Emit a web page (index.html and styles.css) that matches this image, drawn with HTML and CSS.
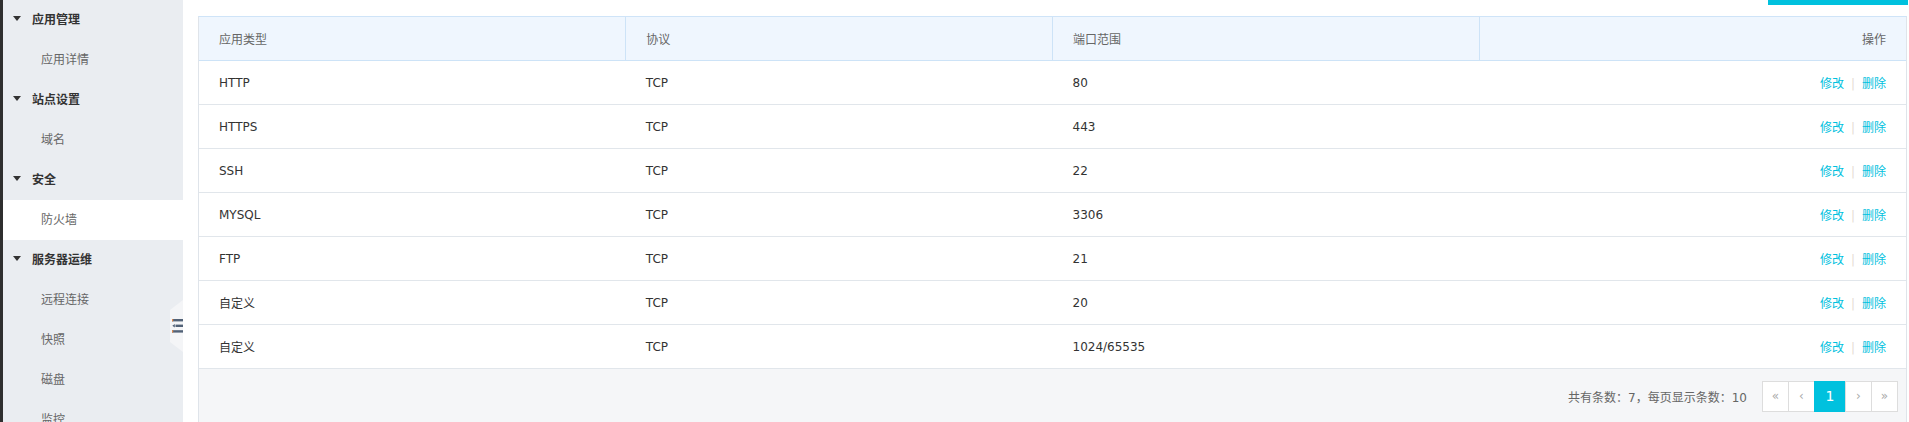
FILE: index.html
```html
<!DOCTYPE html>
<html lang="zh-CN">
<head>
<meta charset="utf-8">
<title>防火墙</title>
<link rel="stylesheet" href="styles.css">
</head>
<body>
<div class="page">
  <div class="strip"></div>
  <aside class="sidebar">
    <div class="group"><span class="caret"></span>应用管理</div>
    <div class="item">应用详情</div>
    <div class="group"><span class="caret"></span>站点设置</div>
    <div class="item">域名</div>
    <div class="group"><span class="caret"></span>安全</div>
    <div class="item active">防火墙</div>
    <div class="group"><span class="caret"></span>服务器运维</div>
    <div class="item">远程连接</div>
    <div class="item">快照</div>
    <div class="item">磁盘</div>
    <div class="item">监控</div>
    <div class="toggle">
      <svg width="11" height="14" viewBox="0 0 11 14">
        <rect x="0" y="0" width="11" height="2.4" fill="#526277"/>
        <rect x="0" y="0" width="1.2" height="2.4" fill="#e08a4c"/>
        <rect x="3.5" y="5.6" width="7.5" height="2.4" fill="#526277"/>
        <path d="M0.3 6.8 L2.8 5 L2.8 8.6 Z" fill="#526277"/>
        <rect x="0" y="11.2" width="11" height="2.4" fill="#526277"/>
        <rect x="0" y="11.2" width="1.2" height="2.4" fill="#e08a4c"/>
      </svg>
    </div>
  </aside>
  <main class="main">
    <div class="topbar"><div class="add-btn"></div></div>
    <div class="panel">
      <table class="grid">
        <thead>
          <tr><th>应用类型</th><th>协议</th><th>端口范围</th><th class="op">操作</th></tr>
        </thead>
        <tbody>
          <tr><td>HTTP</td><td>TCP</td><td>80</td><td class="op"><a>修改</a><span class="sep">|</span><a>删除</a></td></tr>
          <tr><td>HTTPS</td><td>TCP</td><td>443</td><td class="op"><a>修改</a><span class="sep">|</span><a>删除</a></td></tr>
          <tr><td>SSH</td><td>TCP</td><td>22</td><td class="op"><a>修改</a><span class="sep">|</span><a>删除</a></td></tr>
          <tr><td>MYSQL</td><td>TCP</td><td>3306</td><td class="op"><a>修改</a><span class="sep">|</span><a>删除</a></td></tr>
          <tr><td>FTP</td><td>TCP</td><td>21</td><td class="op"><a>修改</a><span class="sep">|</span><a>删除</a></td></tr>
          <tr><td>自定义</td><td>TCP</td><td>20</td><td class="op"><a>修改</a><span class="sep">|</span><a>删除</a></td></tr>
          <tr><td>自定义</td><td>TCP</td><td>1024/65535</td><td class="op"><a>修改</a><span class="sep">|</span><a>删除</a></td></tr>
        </tbody>
      </table>
      <div class="footer">
        <span class="total">共有条数：7，每页显示条数：10</span>
        <div class="pager">
          <span class="pg">«</span>
          <span class="pg">‹</span>
          <span class="pg current">1</span>
          <span class="pg">›</span>
          <span class="pg">»</span>
        </div>
      </div>
    </div>
  </main>
</div>
</body>
</html>
```
FILE: styles.css
```css
html, body {
  margin: 0;
  padding: 0;
  background: #fff;
  font-family: "DejaVu Sans", "Noto Sans CJK SC", sans-serif;
  font-size: 12px;
  color: #333;
}
.page {
  display: flex;
  height: 422px;
  overflow: hidden;
}
.strip {
  width: 3px;
  background: #2f2f2f;
  flex: none;
}
.sidebar {
  position: relative;
  width: 180px;
  flex: none;
  background: #eaedf1;
}
.group, .item {
  height: 40px;
  line-height: 40px;
  white-space: nowrap;
}
.group {
  display: flex;
  align-items: center;
  padding-left: 10px;
  color: #333;
  font-weight: 600;
}
.caret {
  width: 0;
  height: 0;
  border-left: 4.5px solid transparent;
  border-right: 4.5px solid transparent;
  border-top: 5px solid #333;
  margin-right: 11px;
  margin-top: -4px;
}
.item {
  padding-left: 38px;
  color: #666;
}
.item.active {
  background: #fff;
}
.toggle {
  position: absolute;
  right: 0;
  top: 300px;
  width: 13px;
  height: 52px;
  background: #f4f5f7;
  clip-path: polygon(0 19%, 100% 0, 100% 100%, 0 81%);
  display: flex;
  align-items: center;
  justify-content: flex-end;
}
.toggle svg {
  display: block;
  margin-top: -1px;
}
.main {
  flex: 1;
  padding: 0 2px 0 15px;
  min-width: 0;
}
.topbar {
  display: flex;
  justify-content: flex-end;
  height: 16px;
  margin-right: -1px;
}
.add-btn {
  width: 140px;
  height: 5px;
  background: #00c1de;
}
.panel {
  border: 1px solid #dfe4ea;
  border-top-color: #cfe4f8;
  background: #f5f6f8;
}
.grid {
  width: 100%;
  border-collapse: collapse;
  table-layout: fixed;
  background: #fff;
}
.grid th {
  height: 43px;
  padding: 0 20px;
  text-align: left;
  font-weight: normal;
  color: #666;
  background: #eff6fe;
  border-bottom: 1px solid #cde3f7;
  border-left: 1px solid #cde3f7;
}
.grid th:first-child {
  border-left: none;
}
.grid td {
  height: 43px;
  padding: 0 20px;
  border-bottom: 1px solid #e1e6eb;
  color: #333;
}
.grid .op {
  text-align: right;
}
.grid td a {
  color: #00c1de;
}
.sep {
  color: #e6dcd3;
  margin: 0 7px;
}
.footer {
  display: flex;
  justify-content: flex-end;
  align-items: center;
  padding: 12px 8px 12px 0;
}
.total {
  color: #666;
  margin-right: 16px;
}
.pager {
  display: flex;
}
.pg {
  width: 25px;
  height: 29px;
  line-height: 29px;
  text-align: center;
  border: 1px solid #dddddd;
  margin-left: -1px;
  background: #fff;
  color: #aaa;
  font-size: 12px;
}
.pg.current {
  width: 30px;
  background: #00c1de;
  border-color: #00c1de;
  color: #fff;
  font-size: 14px;
}
```
